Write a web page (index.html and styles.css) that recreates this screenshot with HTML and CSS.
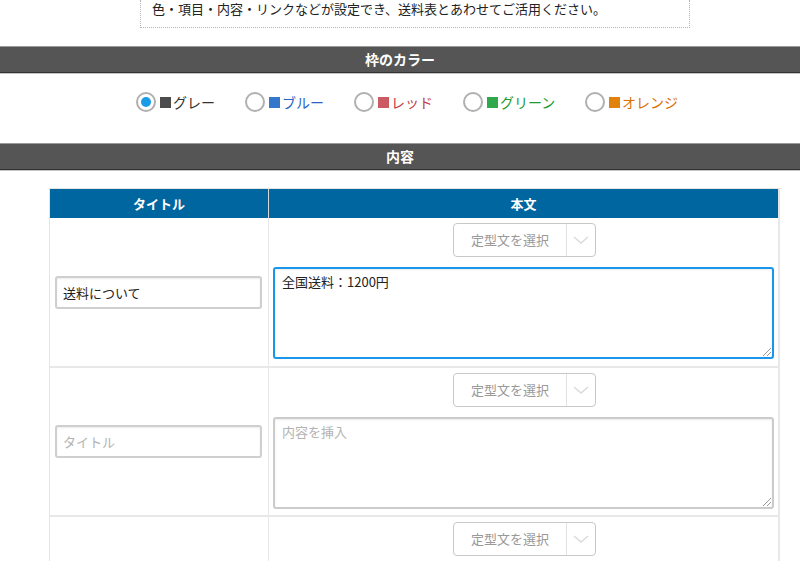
FILE: index.html
```html
<!DOCTYPE html>
<html lang="ja">
<head>
<meta charset="utf-8">
<link rel="stylesheet" href="styles.css">
</head>
<body>
<div class="note">色・項目・内容・リンクなどが設定でき、送料表とあわせてご活用ください。</div>

<h2 class="bar bar-first">枠のカラー</h2>
<div class="colors">
  <label class="opt"><span class="radio on"></span><span class="sq sq-gray"></span><span class="t-gray">グレー</span></label>
  <label class="opt"><span class="radio"></span><span class="sq sq-blue"></span><span class="t-blue">ブルー</span></label>
  <label class="opt"><span class="radio"></span><span class="sq sq-red"></span><span class="t-red">レッド</span></label>
  <label class="opt"><span class="radio"></span><span class="sq sq-green"></span><span class="t-green">グリーン</span></label>
  <label class="opt"><span class="radio"></span><span class="sq sq-orange"></span><span class="t-orange">オレンジ</span></label>
</div>

<h2 class="bar">内容</h2>
<div class="grid">
  <div class="th th-l">タイトル</div>
  <div class="th">本文</div>

  <div class="cell cell-l"><div class="input">送料について</div></div>
  <div class="cell cell-r">
    <div class="sel"><span class="sel-t">定型文を選択</span><span class="sel-c"><svg width="16" height="10" viewBox="0 0 16 10"><path d="M1 2 L8 8 L15 2" fill="none" stroke="#dadada" stroke-width="1.5"/></svg></span></div>
    <div class="ta ta-focus">全国送料：1200円<span class="grip"></span></div>
  </div>

  <div class="cell cell-l"><div class="input ph">タイトル</div></div>
  <div class="cell cell-r">
    <div class="sel"><span class="sel-t">定型文を選択</span><span class="sel-c"><svg width="16" height="10" viewBox="0 0 16 10"><path d="M1 2 L8 8 L15 2" fill="none" stroke="#dadada" stroke-width="1.5"/></svg></span></div>
    <div class="ta ph">内容を挿入<span class="grip"></span></div>
  </div>

  <div class="cell cell-l"></div>
  <div class="cell cell-r">
    <div class="sel"><span class="sel-t">定型文を選択</span><span class="sel-c"><svg width="16" height="10" viewBox="0 0 16 10"><path d="M1 2 L8 8 L15 2" fill="none" stroke="#dadada" stroke-width="1.5"/></svg></span></div>
  </div>
</div>
</body>
</html>
```

FILE: styles.css
```css
html, body { margin: 0; padding: 0; background: #fff; }
body {
  font-family: "Noto Sans CJK JP", "Noto Sans", sans-serif;
  font-size: 13px;
  color: #222;
  width: 800px;
  height: 561px;
  overflow: hidden;
}
.note {
  width: 526px;
  margin-left: 140px;
  padding: 1px 11px 10px 11px;
  line-height: 16px;
  border: 1px dotted #b5b5b5;
  border-top: none;
  font-size: 13px;
  color: #222;
}
.bar {
  margin: 0;
  height: 25px;
  line-height: 25px;
  background: #555;
  border-top: 1px solid #9a9a9a;
  border-bottom: 1px solid #333;
  box-shadow: 0 1px 0 #c4c4c4;
  color: #fff;
  font-size: 14px;
  font-weight: bold;
  text-align: center;
}
.bar-first { margin-top: 18px; }
.colors {
  display: flex;
  justify-content: flex-start;
  padding: 17px 0 29px 136px;
  height: 24px;
}
.opt {
  display: flex;
  align-items: center;
  font-size: 14px;
  height: 24px;
}
.opt:nth-child(1) { width: 109px; }
.opt:nth-child(2) { width: 109px; }
.opt:nth-child(3) { width: 109px; }
.opt:nth-child(4) { width: 122px; }
.radio {
  width: 16px;
  height: 16px;
  border: 2px solid #b0b0b0;
  border-radius: 50%;
  background: #fff;
  position: relative;
  margin-right: 4px;
}
.radio.on::after {
  content: "";
  position: absolute;
  left: 3px; top: 3px;
  width: 10px; height: 10px;
  border-radius: 50%;
  background: #1a9be6;
}
.sq { width: 11px; height: 11px; margin-right: 2px; }
.sq-gray { background: #4c4c4c; }
.sq-blue { background: #3477cb; }
.sq-red { background: #cc5a62; }
.sq-green { background: #2ea84a; }
.sq-orange { background: #e0820b; }
.t-gray { color: #333; }
.t-blue { color: #2b63c3; }
.t-red { color: #c33a44; }
.t-green { color: #229a2e; }
.t-orange { color: #dc7000; }

.grid {
  display: grid;
  grid-template-columns: 219px 511px;
  margin: 18px 0 0 49px;
  width: 732px;
  border-left: 1px solid #e4e4e4;
  border-top: 1px solid #e4e4e4;
}
.th {
  background: #0066a0;
  color: #fff;
  font-weight: bold;
  font-size: 13px;
  text-align: center;
  height: 29px;
  line-height: 29px;
  border-right: 2px solid #e4e4e4;
}
.th-l { border-right: 1px solid #d8d8d8; }
.cell {
  border-right: 2px solid #e8e8e8;
  border-top: 2px solid #e8e8e8;
  height: 149px;
  box-sizing: border-box;
}
.grid > .th + .th + .cell, .grid > .th + .th + .cell + .cell { border-top: none; height: 148px; }
.cell-l {
  display: flex;
  align-items: center;
  padding: 0 5px 0 5px;
  border-right-width: 1px;
}
.cell-r {
  display: flex;
  flex-direction: column;
  align-items: center;
  padding: 5px 4px 0 4px;
}
.input {
  width: 207px;
  height: 33px;
  box-sizing: border-box;
  border: 2px solid #cfcfcf;
  border-radius: 3px;
  box-shadow: inset 0 1px 2px rgba(0,0,0,0.08);
  padding: 0 6px;
  line-height: 29px;
  font-size: 13px;
  color: #222;
}
.ph { color: #b3b3b3; }
.sel {
  display: flex;
  width: 143px;
  height: 34px;
  box-sizing: border-box;
  border: 1px solid #c8c8c8;
  border-radius: 4px;
  background: #fff;
  margin-left: 2px;
}
.sel-t {
  width: 112px;
  text-align: center;
  line-height: 32px;
  color: #999;
  font-size: 13px;
}
.sel-c {
  flex: 1;
  border-left: 1px solid #e2e2e2;
  display: flex;
  align-items: center;
  justify-content: center;
}
.ta {
  position: relative;
  align-self: stretch;
  margin-top: 10px;
  height: 92px;
  box-sizing: border-box;
  border: 2px solid #cbcbcb;
  border-radius: 3px;
  padding: 4px 7px;
  line-height: 17px;
  font-size: 13px;
  box-shadow: inset 0 1px 2px rgba(0,0,0,0.08);
}
.ta-focus { border-color: #1996ea; color: #222; }
.grip {
  position: absolute;
  right: 1px; bottom: 1px;
  width: 8px; height: 8px;
  background: linear-gradient(135deg, transparent 45%, #999 45%, #999 52%, transparent 52%, transparent 70%, #999 70%, #999 77%, transparent 77%);
}
```
